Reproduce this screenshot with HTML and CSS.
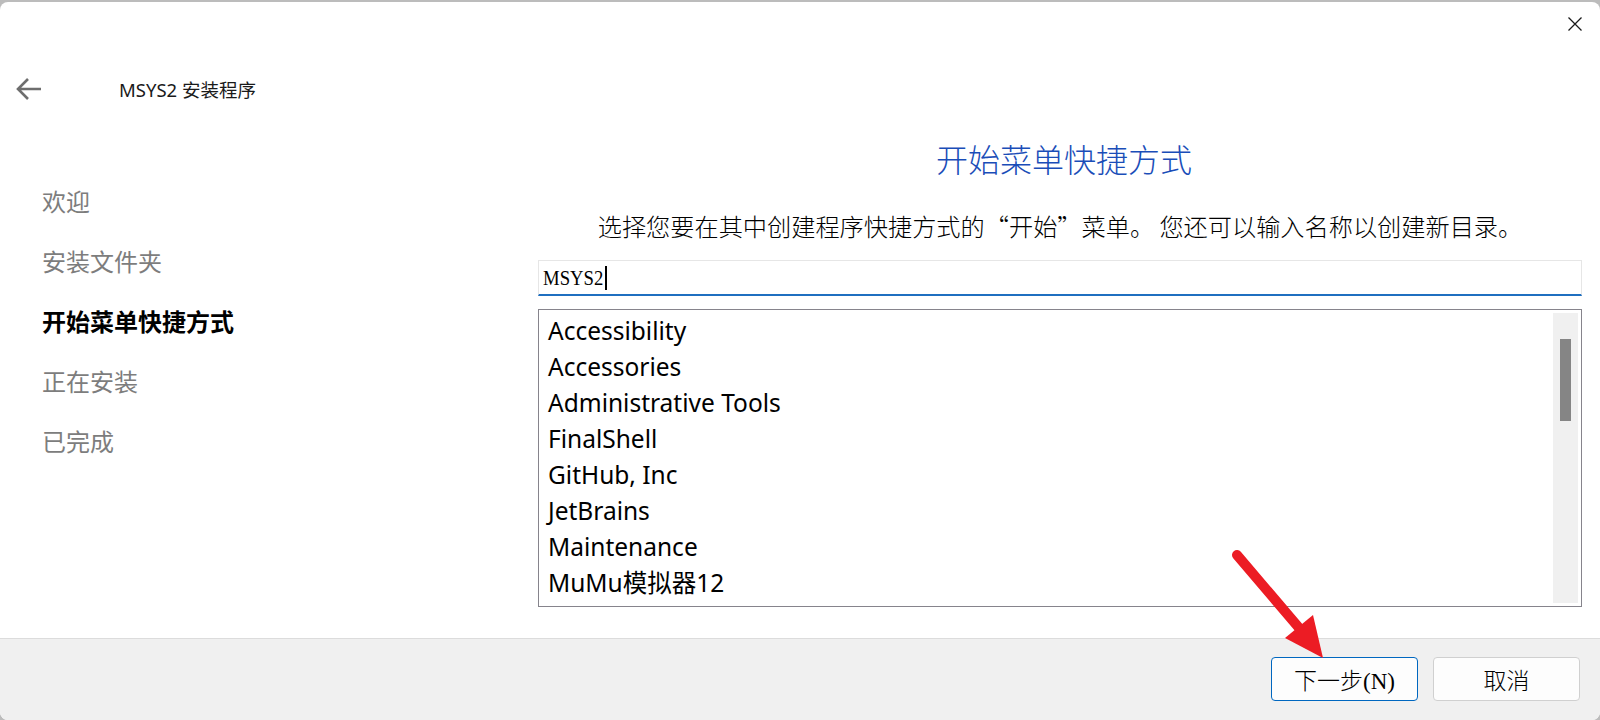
FILE: index.html
```html
<!DOCTYPE html>
<html lang="zh-CN">
<head>
<meta charset="utf-8">
<title>MSYS2 安装程序</title>
<link rel="stylesheet" href="styles.css">
</head>
<body>
<div class="window">
  <div class="titlebar">
    <button class="close" aria-label="关闭">
      <svg width="16" height="16" viewBox="0 0 16 16"><path d="M1.5 1.5 L14.5 14.5 M14.5 1.5 L1.5 14.5" stroke="#1a1a1a" stroke-width="1.3" fill="none"/></svg>
    </button>
  </div>
  <div class="header">
    <svg class="back" width="28" height="24" viewBox="0 0 28 24"><path d="M3 12 H26 M13 2 L3 12 L13 22" stroke="#6e6e6e" stroke-width="2.6" fill="none" stroke-linejoin="miter"/></svg>
    <span class="title">MSYS2 安装程序</span>
  </div>
  <div class="main">
    <ul class="steps">
      <li>欢迎</li>
      <li>安装文件夹</li>
      <li class="current">开始菜单快捷方式</li>
      <li>正在安装</li>
      <li>已完成</li>
    </ul>
    <div class="content">
      <h1 class="heading">开始菜单快捷方式</h1>
      <p class="desc">选择您要在其中创建程序快捷方式的<span class="ql">“</span>开始<span class="qr">”</span>菜单。 您还可以输入名称以创建新目录。</p>
      <div class="input"><span class="value">MSYS2</span><span class="caret"></span></div>
      <div class="listbox">
        <ul class="items">
          <li>Accessibility</li>
          <li>Accessories</li>
          <li>Administrative Tools</li>
          <li>FinalShell</li>
          <li>GitHub, Inc</li>
          <li>JetBrains</li>
          <li>Maintenance</li>
          <li>MuMu模拟器12</li>
        </ul>
        <div class="track"><div class="thumb"></div></div>
      </div>
    </div>
  </div>
  <div class="footer">
    <button class="btn primary">下一步(N)</button>
    <button class="btn">取消</button>
  </div>
  <svg class="annot" width="1600" height="720" viewBox="0 0 1600 720">
    <line x1="1237" y1="555" x2="1300" y2="629" stroke="#ec1c24" stroke-width="10" stroke-linecap="round"/>
    <polygon points="1323,658 1285,638 1313,615" fill="#ec1c24"/>
  </svg>
</div>
</body>
</html>
```
FILE: styles.css
```css
* { box-sizing: border-box; }
html, body { margin: 0; padding: 0; }
body {
  width: 1600px;
  height: 720px;
  overflow: hidden;
  background: #bcbcbc;
  padding-top: 2px;
  font-family: "Noto Sans", "Noto Sans CJK SC", sans-serif;
}
.window {
  position: relative;
  width: 1600px;
  height: 718px;
  background: #ffffff;
  border-radius: 8px;
  overflow: hidden;
  display: flex;
  flex-direction: column;
}
.titlebar {
  height: 44px;
  display: flex;
  justify-content: flex-end;
  align-items: center;
}
.close {
  width: 50px;
  height: 44px;
  border: 0;
  background: transparent;
  padding: 0;
  display: flex;
  align-items: center;
  justify-content: center;
}
.header {
  height: 86px;
  display: flex;
  align-items: center;
  padding-left: 15px;
}
.back { flex: none; }
.title {
  margin-left: 76px;
  font-size: 18.5px;
  color: #1a1a1a;
}
.main {
  flex: 1;
  display: flex;
}
.steps {
  list-style: none;
  margin: 0;
  padding: 40px 0 0 42px;
  width: 538px;
  flex: none;
}
.steps li {
  font-size: 24px;
  line-height: 60px;
  height: 60px;
  color: #7d7d7d;
}
.steps li.current {
  color: #000;
  font-weight: 700;
}
.content {
  flex: 1;
  padding-right: 18px;
  display: flex;
  flex-direction: column;
}
.heading {
  margin: 8px 0 0 8px;
  font-size: 32px;
  line-height: 40px;
  font-weight: 300;
  color: #1a4db8;
  text-align: center;
}
.desc {
  margin: 28px 0 0;
  font-family: "Noto Sans CJK SC", sans-serif;
  font-size: 24.2px;
  line-height: 36px;
  font-weight: 300;
  color: #000;
  text-align: center;
}
.ql, .qr {
  display: inline-block;
  width: 1em;
}
.ql { text-align: right; }
.qr { text-align: left; }
.input {
  margin-top: 16px;
  height: 36px;
  border: 1px solid #e6e6e6;
  border-bottom: 2px solid #1f6fc0;
  display: flex;
  align-items: center;
  padding-left: 4px;
}
.value {
  font-family: "Liberation Serif", serif;
  font-size: 22px;
  transform: scaleX(0.85);
  transform-origin: left center;
  display: inline-block;
  width: 62px;
  color: #000;
}
.caret {
  width: 2px;
  height: 24px;
  background: #000;
}
.listbox {
  margin-top: 13px;
  height: 298px;
  border: 1px solid #86848c;
  display: flex;
}
.items {
  flex: 1;
  list-style: none;
  margin: 0;
  padding: 3px 0 0 9px;
}
.items li {
  font-size: 24.5px;
  line-height: 36px;
  color: #000;
}
.track {
  width: 25px;
  margin: 3px 3px 3px 0;
  background: #f0f0f0;
  display: flex;
  justify-content: center;
}
.thumb {
  width: 11px;
  height: 82px;
  margin-top: 26px;
  background: #858585;
}
.footer {
  height: 82px;
  margin-top: 26px;
  flex: none;
  background: #f0f0f0;
  border-top: 1px solid #dcdcdc;
  display: flex;
  justify-content: flex-end;
  align-items: flex-start;
  gap: 15px;
  padding: 18px 20px 0 0;
}
.btn {
  width: 147px;
  height: 44px;
  background: #fdfdfd;
  border: 1px solid #d0d0d0;
  border-radius: 4px;
  font-family: "Liberation Serif", "Noto Sans CJK SC", serif;
  font-size: 23px;
  font-weight: 300;
  color: #000;
  padding: 0;
}
.btn.primary {
  border-color: #0067c0;
}
.annot {
  position: absolute;
  left: 0;
  top: -2px;
  pointer-events: none;
}
```
